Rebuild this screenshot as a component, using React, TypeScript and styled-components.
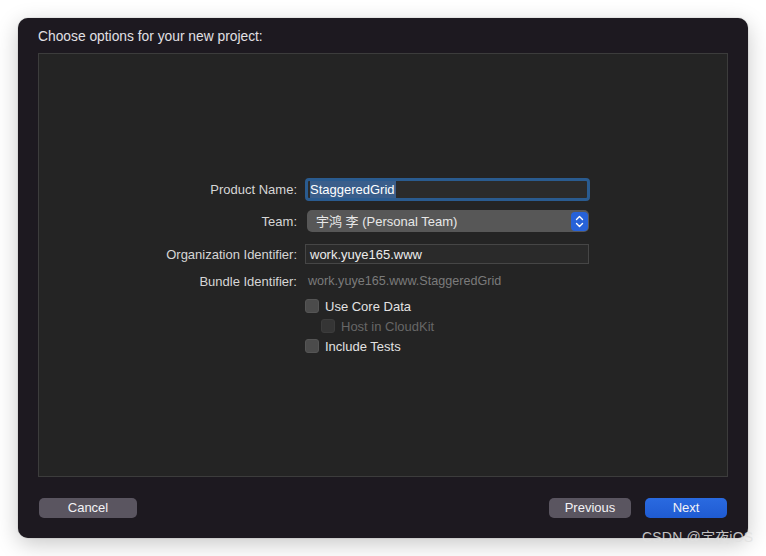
import React from "react";
import styled, { createGlobalStyle } from "styled-components";

const Global = createGlobalStyle`
  html, body { margin: 0; padding: 0; background: #ffffff; }
  body { font-family: "Liberation Sans", "Noto Sans CJK SC", sans-serif; }
  * { box-sizing: border-box; }
`;

const Page = styled.div`
  position: relative;
  width: 766px;
  height: 556px;
  padding: 18px;
  overflow: hidden;
`;

const Window = styled.div`
  width: 730px;
  height: 520px;
  background: #1d1920;
  border-radius: 10px;
  box-shadow: 0 0 1px rgba(0,0,0,0.5), 0 6px 22px rgba(0,0,0,0.22);
  padding: 11px 20px 20px 20px;
  display: flex;
  flex-direction: column;
`;

const Title = styled.div`
  font-size: 13.8px;
  line-height: 16px;
  color: #e2e0e5;
  height: 16px;
`;

const Panel = styled.div`
  margin-top: 8px;
  height: 424px;
  background: #242424;
  border: 1px solid #3c3c3c;
  padding-top: 124px;
  display: flex;
  flex-direction: column;
`;

const Row = styled.div<{ $h: number; $mt?: number }>`
  display: grid;
  grid-template-columns: 258px 1fr;
  column-gap: 8px;
  align-items: center;
  height: ${(p) => p.$h}px;
  margin-top: ${(p) => p.$mt ?? 0}px;
`;

const Label = styled.div`
  text-align: right;
  font-size: 13px;
  color: #d6d6d6;
  white-space: nowrap;
`;

const Cell = styled.div<{ $ml?: number }>`
  display: flex;
  align-items: center;
  margin-left: ${(p) => p.$ml ?? 0}px;
`;

const FocusField = styled.div`
  width: 285px;
  height: 23px;
  border: 3px solid #2a5b8f;
  border-radius: 4px;
  background: #2b2b2b;
  display: flex;
  align-items: center;
  padding-left: 2px;
  font-size: 13px;
  color: #ffffff;
`;

const Selection = styled.span`
  background: #3a5e8b;
  line-height: 17px;
  padding: 0 1px 0 0;
`;

const Popup = styled.div`
  margin-left: 2px;
  width: 282px;
  height: 22px;
  border-radius: 5px;
  background: #575757;
  display: flex;
  align-items: center;
  justify-content: space-between;
  padding: 0 1px 0 9px;
  font-size: 13px;
  color: #e8e8e8;
`;

const PopupText = styled.span`
  margin-top: -2px;
`;

const Stepper = styled.div`
  width: 17px;
  height: 19px;
  border-radius: 4px;
  background: #2762d8;
  display: flex;
  align-items: center;
  justify-content: center;
`;

const TextField = styled.div`
  width: 284px;
  height: 20px;
  background: #2a2a2a;
  border: 1px solid #464646;
  display: flex;
  align-items: center;
  padding-left: 4px;
  font-size: 13px;
  color: #ececec;
`;

const Static = styled.div`
  padding-left: 3px;
  font-size: 12.6px;
  color: #7b7b7b;
`;

const Check = styled.div<{ $dim?: boolean }>`
  width: 14px;
  height: 14px;
  border-radius: 3px;
  background: ${(p) => (p.$dim ? "#353535" : "#4b4b4b")};
  border: 1px solid ${(p) => (p.$dim ? "#3c3c3c" : "#555555")};
`;

const CheckText = styled.span<{ $dim?: boolean }>`
  margin-left: 6px;
  font-size: 13px;
  color: ${(p) => (p.$dim ? "#676767" : "#e2e2e2")};
`;

const Footer = styled.div`
  margin-top: 21px;
  height: 20px;
  display: flex;
  align-items: center;
  padding: 0 1px;
  gap: 14px;
`;

const Spacer = styled.div`
  flex: 1;
`;

const Button = styled.div<{ $w: number; $primary?: boolean }>`
  width: ${(p) => p.$w}px;
  height: 20px;
  border-radius: 5px;
  background: ${(p) => (p.$primary ? "linear-gradient(#2a6ae0, #1f5bd2)" : "#5a5560")};
  color: #f3f2f5;
  font-size: 13px;
  line-height: 18px;
  display: flex;
  align-items: center;
  justify-content: center;
`;

const Watermark = styled.div`
  position: absolute;
  left: 642px;
  top: 528px;
  font-size: 14px;
  line-height: 18px;
  color: rgba(225, 225, 225, 0.85);
  white-space: nowrap;
  letter-spacing: 0.2px;
`;

const Chevrons = () => (
  <svg width="9" height="13" viewBox="0 0 9 13" fill="none">
    <path d="M1.5 4.5 L4.5 1.5 L7.5 4.5" stroke="#ffffff" strokeWidth="1.4" strokeLinecap="round" strokeLinejoin="round" />
    <path d="M1.5 8.5 L4.5 11.5 L7.5 8.5" stroke="#ffffff" strokeWidth="1.4" strokeLinecap="round" strokeLinejoin="round" />
  </svg>
);

export default function App() {
  return (
    <>
      <Global />
      <Page>
        <Window>
          <Title>Choose options for your new project:</Title>
          <Panel>
            <Row $h={23}>
              <Label>Product Name:</Label>
              <Cell>
                <FocusField>
                  <Selection>StaggeredGrid</Selection>
                </FocusField>
              </Cell>
            </Row>
            <Row $h={22} $mt={9}>
              <Label>Team:</Label>
              <Cell>
                <Popup>
                  <PopupText>宇鸿 李 (Personal Team)</PopupText>
                  <Stepper>
                    <Chevrons />
                  </Stepper>
                </Popup>
              </Cell>
            </Row>
            <Row $h={20} $mt={12}>
              <Label>Organization Identifier:</Label>
              <Cell>
                <TextField>work.yuye165.www</TextField>
              </Cell>
            </Row>
            <Row $h={20} $mt={7}>
              <Label>Bundle Identifier:</Label>
              <Cell>
                <Static>work.yuye165.www.StaggeredGrid</Static>
              </Cell>
            </Row>
            <Row $h={20} $mt={5}>
              <span />
              <Cell>
                <Check />
                <CheckText>Use Core Data</CheckText>
              </Cell>
            </Row>
            <Row $h={20}>
              <span />
              <Cell $ml={16}>
                <Check $dim />
                <CheckText $dim>Host in CloudKit</CheckText>
              </Cell>
            </Row>
            <Row $h={20}>
              <span />
              <Cell>
                <Check />
                <CheckText>Include Tests</CheckText>
              </Cell>
            </Row>
          </Panel>
          <Footer>
            <Button $w={98}>Cancel</Button>
            <Spacer />
            <Button $w={82}>Previous</Button>
            <Button $w={82} $primary>Next</Button>
          </Footer>
        </Window>
        <Watermark>CSDN @宇夜iOS</Watermark>
      </Page>
    </>
  );
}
